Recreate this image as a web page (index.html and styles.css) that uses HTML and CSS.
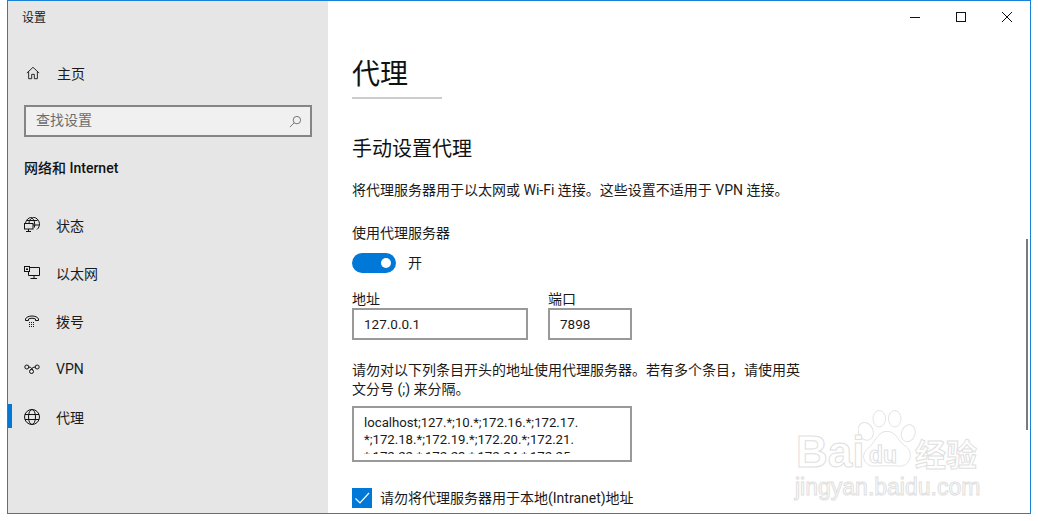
FILE: index.html
```html
<!DOCTYPE html>
<html lang="zh-CN">
<head>
<meta charset="utf-8">
<title>设置</title>
<link rel="stylesheet" href="styles.css">
</head>
<body>
<div class="window">
  <aside class="sidebar">
    <div class="app-title">设置</div>
    <div class="nav-row home">
      <svg class="icon" viewBox="0 0 16 16"><path d="M1 8 8 1.500 15 8M3 6.500V14.500H6.500V9.500H9.500V14.500H13V6.500"/></svg>
      <span>主页</span>
    </div>
    <div class="search">
      <span class="search-text">查找设置</span>
      <svg class="search-icon" viewBox="0 0 14 14"><circle cx="8.500" cy="5.500" r="4"/><path d="M5.500 8.500 1 13"/></svg>
    </div>
    <div class="section">网络和 Internet</div>
    <nav class="nav">
      <div class="nav-row">
        <svg class="icon" viewBox="0 0 16 16"><path d="M1.500 6.500A7 7 0 1 1 13 12.500M8 1C6 2 5 4 5 6.500M8 1C10.500 3 11 6 10.500 10.500M2.500 3.500H13.500M9 8H15"/><rect x="0.500" y="6.500" width="8.500" height="5.500"/><path d="M4.500 12V14.500M2 14.500H7"/></svg>
        <span>状态</span>
      </div>
      <div class="nav-row">
        <svg class="icon" viewBox="0 0 16 16"><path d="M5.500 2.500H15.500V10.500H4.500V7M10 10.500V13.500M6.500 13.500H13"/><rect x="0.500" y="1.500" width="5" height="5"/><rect x="2" y="3.500" width="2" height="1.500" class="solid"/></svg>
        <span>以太网</span>
      </div>
      <div class="nav-row">
        <svg class="icon" viewBox="0 0 16 16"><path d="M1.500 7.500V6C3 2 13 2 14.500 6V7.500H11.500V6C10 5 6 5 4.500 6V7.500Z"/><path class="dots" d="M5 9.500H11M5 11.500H11M5 13.500H11"/></svg>
        <span>拨号</span>
      </div>
      <div class="nav-row">
        <svg class="icon" viewBox="0 0 16 16"><circle cx="2.800" cy="6" r="2"/><circle cx="13.200" cy="6" r="2"/><circle cx="7.500" cy="10.500" r="2"/><path d="M4.800 6C7 6 8.500 8 8.800 9M11.200 6C9.500 6 8 7 6.500 9"/></svg>
        <span>VPN</span>
      </div>
      <div class="nav-row active">
        <svg class="icon" viewBox="0 0 16 16"><circle cx="8" cy="8" r="7.500"/><ellipse cx="8" cy="8" rx="3.500" ry="7.500"/><path d="M1 5.500H15M1 10.500H15"/></svg>
        <span>代理</span>
      </div>
    </nav>
  </aside>

  <main class="main">
    <div class="titlebar">
      <svg class="win-btn" viewBox="0 0 10 10"><path d="M0 5.500H10"/></svg>
      <svg class="win-btn" viewBox="0 0 10 10"><rect x="0.500" y="0.500" width="9" height="9"/></svg>
      <svg class="win-btn" viewBox="0 0 10 10"><path d="M0 0 10 10M10 0 0 10"/></svg>
    </div>
    <h1 class="page-title">代理</h1>
    <div class="title-rule"></div>
    <h2 class="subtitle">手动设置代理</h2>
    <p class="desc">将代理服务器用于以太网或 Wi-Fi 连接。这些设置不适用于 VPN 连接。</p>
    <div class="label">使用代理服务器</div>
    <div class="toggle-row">
      <div class="toggle"><div class="knob"></div></div>
      <span>开</span>
    </div>
    <div class="fields">
      <div class="field addr">
        <div class="field-label">地址</div>
        <div class="input">127.0.0.1</div>
      </div>
      <div class="field port">
        <div class="field-label">端口</div>
        <div class="input">7898</div>
      </div>
    </div>
    <p class="exclude">请勿对以下列条目开头的地址使用代理服务器。若有多个条目，请使用英文分号 (;) 来分隔。</p>
    <div class="textarea"><div class="textarea-clip">localhost;127.*;10.*;172.16.*;172.17.<br>*;172.18.*;172.19.*;172.20.*;172.21.<br>*;172.22.*;172.23.*;172.24.*;172.25.</div></div>
    <div class="check-row">
      <div class="checkbox"><svg viewBox="0 0 20 20"><path d="M3.500 10.500 8 15 17 5"/></svg></div>
      <span>请勿将代理服务器用于本地(Intranet)地址</span>
    </div>
    <div class="scrollbar"></div>
  </main>
</div>

<div class="watermark">
  <svg class="paw" viewBox="0 0 60 62">
    <ellipse cx="8" cy="22" rx="7.500" ry="9.500" transform="rotate(-25 8 22)"/>
    <ellipse cx="22" cy="9" rx="6.500" ry="8.500"/>
    <ellipse cx="38" cy="9" rx="6.500" ry="8.500"/>
    <ellipse cx="52" cy="24" rx="7" ry="9" transform="rotate(20 52 24)"/>
    <path d="M30 22C40 22 42 34 50 38C58 44 54 59 42 58C36 57.500 24 57.500 18 58C6 59 2 46 10 40C18 34 20 22 30 22Z"/>
  </svg>
  <span class="wm-bai">Bai</span>
  <span class="wm-du">du</span>
  <span class="wm-cn">经验</span>
  <span class="wm-url">jingyan.baidu.com</span>
</div>
</body>
</html>
```
FILE: styles.css
```css
* { box-sizing: border-box; }
html, body { margin: 0; padding: 0; height: 100%; background: #fff; overflow: hidden; }
body { font-family: Roboto, "Noto Sans CJK SC", sans-serif; font-size: 14px; color: #1a1a1a; }

.window {
  margin-left: 7px;
  width: 1024px;
  height: 514px;
  border: 1px solid #1a82d6;
  display: flex;
  overflow: hidden;
  background: #fff;
}

.sidebar { width: 320px; flex: none; height: 100%; background: #e6e6e6; }
.app-title { font-size: 12px; line-height: 16px; padding: 9px 0 0 14px; }
.nav-row { display: flex; align-items: center; height: 48px; padding-left: 16px; position: relative; }
.nav-row span { margin-left: 16px; }
.home { margin-top: 23px; padding-left: 18px; }
.home .icon { width: 14px; height: 14px; }
.home span { margin-left: 17px; }
.icon { width: 16px; height: 16px; flex: none; fill: none; stroke: #111; stroke-width: 1; }
.icon .solid { fill: #111; stroke: none; }
.icon .dots { stroke-dasharray: 1 1; }

.search {
  margin: 8px 0 0 16px;
  width: 288px;
  height: 32px;
  border: 2px solid #858585;
  background: #f0f0f0;
  display: flex;
  align-items: center;
  justify-content: space-between;
  padding: 0 8px 0 10px;
  color: #6d6d6d;
}
.search-text { padding-bottom: 4px; }
.search-icon { width: 13px; height: 13px; fill: none; stroke: #6d6d6d; stroke-width: 1; }
.section { margin: 20px 0 0 16px; font-size: 14px; line-height: 22px; font-weight: 500; color: #111; }
.nav { margin-top: 22px; }
.active::before { content: ""; position: absolute; left: 0; top: 11px; width: 4px; height: 24px; background: #0078d7; }

.main { flex: 1; position: relative; padding-left: 24px; min-width: 0; }
.titlebar { position: absolute; top: 11px; right: 18px; display: flex; gap: 36px; }
.win-btn { width: 10px; height: 10px; fill: none; stroke: #111; stroke-width: 1; display: block; }
.page-title { margin: 0; padding-top: 54px; font-size: 28px; line-height: 40px; font-weight: 400; color: #111; height: 96px; }
.title-rule { width: 90px; height: 2px; background: #ccc; }
.subtitle { margin: 36px 0 0; font-size: 20px; line-height: 28px; font-weight: 400; color: #111; }
.desc { margin: 15px 0 0; line-height: 24px; white-space: nowrap; }
.label { margin-top: 19px; line-height: 24px; }
.toggle-row { margin-top: 8px; display: flex; align-items: center; gap: 12px; height: 20px; line-height: 18px; }
.toggle { width: 44px; height: 20px; border-radius: 10px; background: #0078d7; position: relative; }
.knob { position: absolute; right: 5px; top: 5px; width: 10px; height: 10px; border-radius: 50%; background: #fff; }
.fields { display: flex; gap: 20px; margin-top: 16px; }
.field-label { line-height: 20px; height: 19px; }
.addr { width: 176px; }
.port { width: 84px; }
.input { height: 32px; border: 2px solid #999; background: #fff; padding: 0 10px; line-height: 28px; font-size: 13.500px; }
.exclude { margin: 21px 0 0; width: 450px; line-height: 19px; }
.textarea {
  margin-top: 7px;
  width: 280px;
  height: 56px;
  border: 2px solid #999;
  padding: 6px 10px 0;
  font-size: 13.200px;
  line-height: 17px;
  white-space: nowrap;
}
.textarea-clip { height: 40px; overflow: hidden; }
.check-row { margin-top: 26px; display: flex; align-items: center; gap: 8px; line-height: 18px; }
.checkbox { width: 20px; height: 20px; background: #0078d7; flex: none; }
.checkbox svg { display: block; width: 20px; height: 20px; fill: none; stroke: #fff; stroke-width: 1.200; }
.scrollbar { position: absolute; right: 2px; top: 238px; width: 2px; height: 191px; background: #7a7a7a; }

.watermark { position: absolute; left: 795px; top: 408px; width: 190px; height: 92px; pointer-events: none; }
.paw { position: absolute; left: 63px; top: 2px; width: 58px; height: 60px; fill: #fff; stroke: #e2e2e2; stroke-width: 1; }
.watermark span { position: absolute; color: #fff; -webkit-text-stroke: 1px #e0e0e0; font-family: "Liberation Sans", sans-serif; font-weight: 700; white-space: nowrap; }
.wm-bai { left: 1px; top: 20px; font-size: 44px; line-height: 48px; }
.wm-du { left: 74px; top: 35px; font-size: 23px; line-height: 24px; }
.watermark .wm-cn { left: 120px; top: 26px; font-size: 31px; line-height: 38px; font-family: "Noto Sans CJK SC", sans-serif; }
.watermark .wm-url { left: 0; top: 65px; font-size: 23px; line-height: 28px; font-weight: 400; }
```
